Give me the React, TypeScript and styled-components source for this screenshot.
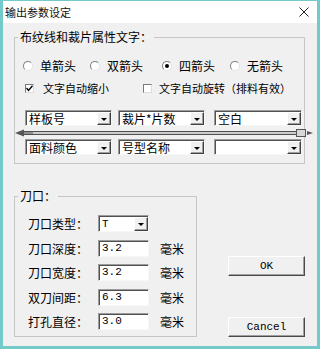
import React from 'react';
import styled, { createGlobalStyle } from 'styled-components';

const GlobalStyle = createGlobalStyle`
  html, body {
    margin: 0;
    padding: 0;
    background: #f0f0f0;
  }
  body {
    font-family: "Noto Sans CJK SC", sans-serif;
    font-size: 12px;
    color: #000;
  }
`;

const Window = styled.div`
  box-sizing: border-box;
  width: 320px;
  height: 349px;
  border: 3px solid #74c9c9;
  border-top-width: 1px;
  background: #f0f0f0;
  display: flex;
  flex-direction: column;
`;

const TitleBar = styled.div`
  height: 22px;
  flex: none;
  background: #fff;
  display: flex;
  align-items: center;
  justify-content: space-between;
  padding: 0 8px 0 2px;
  font-size: 11px;
  color: #111;
`;

const Body = styled.div`
  flex: 1;
  padding: 7px 12px 0 11px;
  display: flex;
  flex-direction: column;
`;

const GroupBox = styled.fieldset<{ $width?: number }>`
  margin: 0;
  padding: 0;
  min-width: 0;
  border: 1px solid #c6c6c6;
  ${(p) => (p.$width ? `width: ${p.$width}px; box-sizing: border-box;` : '')}
`;

const Legend = styled.legend`
  margin-left: 3px;
  padding: 0 2px;
  height: 14px;
  line-height: 14px;
  font-size: 12px;
`;

const OptionRow = styled.div<{ $top: number; $left: number; $cols: string; $size?: number }>`
  display: grid;
  grid-template-columns: ${(p) => p.$cols};
  align-items: center;
  height: 16px;
  margin-top: ${(p) => p.$top}px;
  padding-left: ${(p) => p.$left}px;
  font-size: ${(p) => p.$size ?? 12}px;
`;

const Option = styled.label<{ $gap: number }>`
  display: flex;
  align-items: center;
  gap: ${(p) => p.$gap}px;
  white-space: nowrap;
  line-height: 16px;
`;

const RadioDot = styled.span<{ $checked?: boolean }>`
  box-sizing: border-box;
  width: 10px;
  height: 10px;
  border-radius: 50%;
  background: #fff;
  border: 1px solid;
  border-color: #7f7f7f #e3e3e3 #e3e3e3 #7f7f7f;
  display: flex;
  align-items: center;
  justify-content: center;
  &::after {
    content: '';
    width: 4px;
    height: 4px;
    border-radius: 50%;
    background: #000;
    display: ${(p) => (p.$checked ? 'block' : 'none')};
  }
`;

const CheckBox = styled.span`
  box-sizing: border-box;
  width: 9px;
  height: 9px;
  background: #fff;
  border: 1px solid;
  border-color: #7a7a7a #dcdcdc #dcdcdc #7a7a7a;
  display: flex;
  align-items: center;
  justify-content: center;
`;

const ComboRow = styled.div<{ $top: number; $bottom?: number }>`
  display: flex;
  height: 16px;
  margin-top: ${(p) => p.$top}px;
  margin-bottom: ${(p) => p.$bottom ?? 0}px;
  padding-left: 10px;
`;

const ComboBox = styled.div<{ $width: number; $height?: number; $gapAfter?: number }>`
  box-sizing: border-box;
  width: ${(p) => p.$width}px;
  height: ${(p) => p.$height ?? 16}px;
  margin-right: ${(p) => p.$gapAfter ?? 0}px;
  background: #fff;
  border: 1px solid;
  border-color: #9c9c9c #f7f7f7 #f7f7f7 #9c9c9c;
  box-shadow: inset 1px 1px 0 #505050;
  display: flex;
  align-items: stretch;
`;

const ComboText = styled.span<{ $mono?: boolean }>`
  flex: 1;
  display: flex;
  align-items: center;
  padding-left: 3px;
  white-space: nowrap;
  font-family: ${(p) => (p.$mono ? '"Liberation Mono", monospace' : '"Noto Sans CJK SC", sans-serif')};
  font-size: ${(p) => (p.$mono ? 11 : 12)}px;
`;

const DropButton = styled.span`
  box-sizing: border-box;
  width: 14px;
  flex: none;
  margin: 1px 0 0;
  background: #f0f0f0;
  border: 1px solid;
  border-color: #fff #404040 #404040 #fff;
  box-shadow: inset -1px -1px 0 #a0a0a0;
  display: flex;
  align-items: center;
  justify-content: center;
  &::after {
    content: '';
    border-left: 3px solid transparent;
    border-right: 3px solid transparent;
    border-top: 3px solid #000;
    margin-top: 1px;
  }
`;

const ArrowRow = styled.div`
  height: 13px;
  overflow: visible;
`;

const BottomArea = styled.div`
  display: flex;
  margin-top: 25px;
`;

const FieldList = styled.div`
  display: flex;
  flex-direction: column;
  gap: 7.5px;
  padding: 12px 0 6px 13px;
`;

const FieldRow = styled.div`
  display: flex;
  align-items: center;
  height: 17px;
`;

const FieldLabel = styled.span`
  width: 70px;
  white-space: nowrap;
`;

const TextBox = styled.div`
  box-sizing: border-box;
  width: 51px;
  height: 17px;
  background: #fff;
  border: 1px solid;
  border-color: #9c9c9c #f7f7f7 #f7f7f7 #9c9c9c;
  box-shadow: inset 1px 1px 0 #505050;
  padding-left: 3px;
  font-family: "Liberation Mono", monospace;
  font-size: 11px;
  line-height: 15px;
`;

const Unit = styled.span`
  margin-left: 11px;
`;

const ButtonColumn = styled.div`
  display: flex;
  flex-direction: column;
  gap: 41px;
  padding-top: 67px;
  margin-left: 31px;
`;

const PushButton = styled.button`
  box-sizing: border-box;
  width: 77px;
  height: 20px;
  padding: 0;
  background: #f0f0f0;
  border: 1px solid;
  border-color: #fff #4a4a4a #4a4a4a #fff;
  box-shadow: inset -1px -1px 0 #a0a0a0;
  font-family: "Liberation Mono", monospace;
  font-size: 11px;
  color: #000;
`;

const CloseIcon = () => (
  <svg width="10" height="10" viewBox="0 0 10 10">
    <path d="M0.5 0.5 L9.5 9.5 M9.5 0.5 L0.5 9.5" stroke="#222" strokeWidth="1" />
  </svg>
);

const CheckMark = () => (
  <svg width="7" height="7" viewBox="0 0 7 7">
    <path d="M0.5 3 L2.5 5.5 L6.5 0.8" stroke="#000" strokeWidth="1.4" fill="none" />
  </svg>
);

const GrainArrow = () => (
  <svg width="300" height="13" viewBox="0 0 300 13" style={{ display: 'block' }}>
    <polygon points="0,7 9,3.5 9,10.5" fill="#555" />
    <polygon points="9,5 18,6 18,8 9,9" fill="#777" />
    <line x1="9" y1="5.5" x2="284" y2="5.5" stroke="#4f4f4f" strokeWidth="1" />
    <line x1="9" y1="7" x2="284" y2="7" stroke="#a8a8a8" strokeWidth="1" />
    <line x1="9" y1="8.5" x2="284" y2="8.5" stroke="#4f4f4f" strokeWidth="1" />
    <rect x="281.5" y="3.5" width="9" height="7" fill="#d8d8d8" stroke="#555" />
    <polygon points="292,5 298,7 292,9" fill="#555" />
  </svg>
);

const Combo = ({ text, width, gapAfter, height, mono }: { text: string; width: number; gapAfter?: number; height?: number; mono?: boolean }) => (
  <ComboBox $width={width} $gapAfter={gapAfter} $height={height}>
    <ComboText $mono={mono}>{text}</ComboText>
    <DropButton />
  </ComboBox>
);

const arrowOptions = [
  { label: '单箭头', checked: false },
  { label: '双箭头', checked: false },
  { label: '四箭头', checked: true },
  { label: '无箭头', checked: false },
];

const notchFields = [
  { label: '刀口深度：', value: '3.2' },
  { label: '刀口宽度：', value: '3.2' },
  { label: '双刀间距：', value: '6.3' },
  { label: '打孔直径：', value: '3.0' },
];

export default function App() {
  return (
    <>
      <GlobalStyle />
      <Window>
        <TitleBar>
          <span>输出参数设定</span>
          <CloseIcon />
        </TitleBar>
        <Body>
          <GroupBox>
            <Legend>布纹线和裁片属性文字：</Legend>
            <OptionRow $top={14} $left={8} $cols="67px 72px 68px auto">
              {arrowOptions.map((o) => (
                <Option key={o.label} $gap={7}>
                  <RadioDot $checked={o.checked} />
                  {o.label}
                </Option>
              ))}
            </OptionRow>
            <OptionRow $top={6} $left={10} $cols="118px auto" $size={11}>
              <Option $gap={9}>
                <CheckBox>
                  <CheckMark />
                </CheckBox>
                文字自动缩小
              </Option>
              <Option $gap={7}>
                <CheckBox />
                文字自动旋转（排料有效）
              </Option>
            </OptionRow>
            <ComboRow $top={14}>
              <Combo text="样板号" width={87} gapAfter={6} />
              <Combo text="裁片*片数" width={87} gapAfter={9} />
              <Combo text="空白" width={88} />
            </ComboRow>
            <ArrowRow>
              <GrainArrow />
            </ArrowRow>
            <ComboRow $top={0} $bottom={8}>
              <Combo text="面料颜色" width={87} gapAfter={6} />
              <Combo text="号型名称" width={87} gapAfter={9} />
              <Combo text="" width={88} />
            </ComboRow>
          </GroupBox>
          <BottomArea>
            <GroupBox $width={186}>
              <Legend>刀口：</Legend>
              <FieldList>
                <FieldRow>
                  <FieldLabel>刀口类型：</FieldLabel>
                  <Combo text="T" width={51} height={17} mono />
                </FieldRow>
                {notchFields.map((f) => (
                  <FieldRow key={f.label}>
                    <FieldLabel>{f.label}</FieldLabel>
                    <TextBox>{f.value}</TextBox>
                    <Unit>毫米</Unit>
                  </FieldRow>
                ))}
              </FieldList>
            </GroupBox>
            <ButtonColumn>
              <PushButton>OK</PushButton>
              <PushButton>Cancel</PushButton>
            </ButtonColumn>
          </BottomArea>
        </Body>
      </Window>
    </>
  );
}
